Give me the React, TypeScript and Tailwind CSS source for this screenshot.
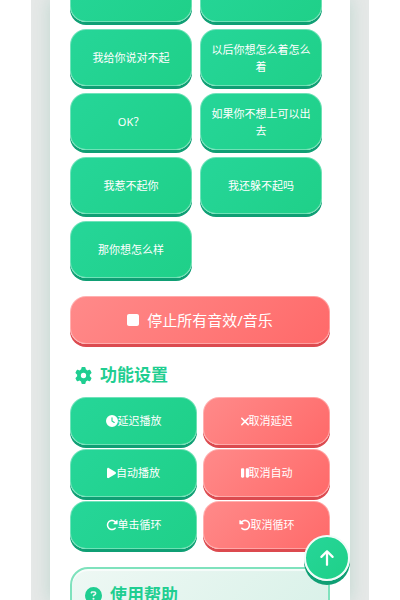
import type { ReactNode } from "react";
import {
  FaArrowUp,
  FaCircleQuestion,
  FaClock,
  FaGear,
  FaPause,
  FaPlay,
  FaRotateLeft,
  FaRotateRight,
  FaStop,
  FaXmark,
} from "react-icons/fa6";

const tones = {
  green:
    "bg-linear-135 from-[#26d699] to-[#1fd088] shadow-[0_3px_0_#0f9f74] active:shadow-none",
  red: "bg-linear-135 from-[#ff8a8a] to-[#ff6969] shadow-[0_3px_0_#dc4a4f] active:shadow-none",
};

type ButtonProps = {
  tone: keyof typeof tones;
  className: string;
  children: ReactNode;
};

function PushButton({ tone, className, children }: ButtonProps) {
  return (
    <button
      type="button"
      className={`flex w-full cursor-pointer items-center justify-center rounded-2xl border border-white/35 bg-origin-border text-white ${tones[tone]} ${className}`}
    >
      {children}
    </button>
  );
}

const sounds = [
  "",
  "",
  "我给你说对不起",
  "以后你想怎么着怎么着",
  "OK？",
  "如果你不想上可以出去",
  "我惹不起你",
  "我还躲不起吗",
  "那你想怎么样",
];

const settings: { tone: keyof typeof tones; icon: ReactNode; label: string }[] = [
  { tone: "green", icon: <FaClock className="size-3" />, label: "延迟播放" },
  { tone: "red", icon: <FaXmark className="h-[11px] w-2" viewBox="32 64 320 384" />, label: "取消延迟" },
  { tone: "green", icon: <FaPlay className="h-3 w-[9px]" />, label: "自动播放" },
  { tone: "red", icon: <FaPause className="h-3 w-2" viewBox="0 48 320 416" />, label: "取消自动" },
  { tone: "green", icon: <FaRotateRight className="size-3" />, label: "单击循环" },
  { tone: "red", icon: <FaRotateLeft className="size-3" />, label: "取消循环" },
];

export default function App() {
  return (
    <div className="h-screen overflow-hidden bg-white px-[31px] font-['Noto_Sans','Noto_Sans_CJK_SC',sans-serif]">
      <div className="flex h-full overflow-hidden bg-[#e5e8e7] px-[19px]">
        <main className="flow-root min-h-full w-full bg-white px-5 shadow-[0_0_16px_rgba(16,140,100,0.18)]">
          <div className="-mt-[35px] grid grid-cols-2 gap-x-2 gap-y-[7px] pr-2">
            {sounds.map((label, index) => (
              <PushButton key={index} tone="green" className="h-[57px] px-2 text-[11px] leading-[17px]">
                {label}
              </PushButton>
            ))}
          </div>

          <PushButton tone="red" className="mt-[18px] h-12 gap-2 text-[15px]">
            <FaStop className="size-3" viewBox="0 64 384 384" />
            停止所有音效/音乐
          </PushButton>

          <h2 className="mt-[19px] flex h-6 items-center gap-2 pl-[5px] text-[17px] font-bold text-[#1fce91]">
            <FaGear className="size-[17px]" />
            功能设置
          </h2>

          <div className="mt-[10px] grid grid-cols-2 gap-x-[6px] gap-y-1">
            {settings.map(({ tone, icon, label }) => (
              <PushButton key={label} tone={tone} className="h-12 text-[11px]">
                {icon}
                {label}
              </PushButton>
            ))}
          </div>

          <section className="mt-[18px] rounded-[18px] border-2 border-[#7fe2bd] bg-linear-135 from-[#eef8f4] to-[#d8f1e8] px-[13px] pt-[14px] pb-6 shadow-[inset_0_2px_1px_#ffffffb0]">
            <h2 className="flex h-6 items-center gap-2 text-[17px] font-bold text-[#1fce91]">
              <FaCircleQuestion className="size-[17px]" />
              使用帮助
            </h2>
          </section>
        </main>
      </div>

      <button
        type="button"
        aria-label="返回顶部"
        className="fixed right-[50px] bottom-[19px] flex size-[46px] cursor-pointer items-center justify-center rounded-full border-2 border-[#f1fcf8] bg-linear-135 from-[#26d699] to-[#1fd088] text-white shadow-[0_4px_0_#0f9f74]"
      >
        <FaArrowUp className="h-[18px] w-4" />
      </button>
    </div>
  );
}
